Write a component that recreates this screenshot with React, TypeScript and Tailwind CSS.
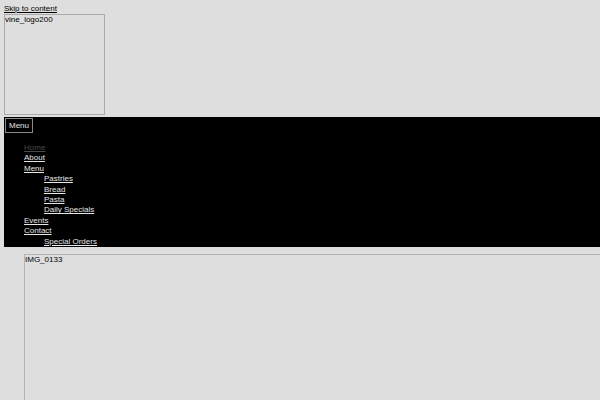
const menu = [
  { label: 'Home', current: true },
  { label: 'About' },
  { label: 'Menu', children: ['Pastries', 'Bread', 'Pasta', 'Daily Specials'] },
  { label: 'Events' },
  { label: 'Contact', children: ['Special Orders'] },
];

export default function App() {
  return (
    <div className="min-h-screen bg-[#dedede] pl-[4px] pt-[4px] text-[8px] leading-[10px] text-black overflow-hidden" style={{ fontFamily: '"Liberation Sans", Arial, sans-serif' }}>
      <a href="#content" className="underline">Skip to content</a>

      {/* Logo placeholder */}
      <div className="w-[101px] h-[101px] border border-[#aaaaaa]">
        <span>vine_logo200</span>
      </div>

      {/* Nav */}
      <nav className="mt-[2px] h-[130px] overflow-hidden bg-black pt-[1px] pl-[1px]">
        <button className="border border-[#8a8a8a] px-[3px] h-[15px] text-[#e0e0e0] leading-[12px]">Menu</button>
        <ul className="mt-[10px] pl-[19px] leading-[10.4px]">
          {menu.map(item => (
            <li key={item.label}>
              <a href="#" className={item.current ? 'text-[#4a4a4a] underline' : 'text-[#e6e6e6] underline'}>{item.label}</a>
              {item.children && (
                <ul className="pl-[20px]">
                  {item.children.map(c => (
                    <li key={c}>
                      <a href="#" className="text-[#e6e6e6] underline">{c}</a>
                    </li>
                  ))}
                </ul>
              )}
            </li>
          ))}
        </ul>
      </nav>

      {/* Featured image placeholder */}
      <div id="content" className="ml-[20px] mt-[7px] w-[640px] h-[300px] border border-[#b4b4b4]">
        <span>IMG_0133</span>
      </div>
    </div>
  );
}
